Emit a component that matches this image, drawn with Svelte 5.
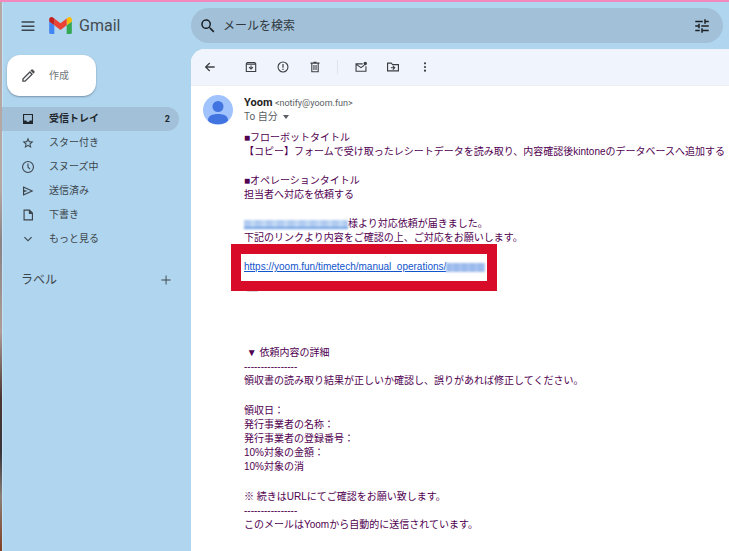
<script lang="ts">
  type NavItem = {
    icon: string;
    label: string;
    count?: number;
  };

  const nav: NavItem[] = [
    { icon: 'inbox', label: '受信トレイ', count: 2 },
    { icon: 'star', label: 'スター付き' },
    { icon: 'clock', label: 'スヌーズ中' },
    { icon: 'send', label: '送信済み' },
    { icon: 'draft', label: '下書き' },
    { icon: 'chevron', label: 'もっと見る' },
  ];

  // All paths are drawn on a 24x24 grid.
  const icons: Record<string, string> = {
    menu: 'M1 4h22v2.500H1zM1 11h22v2.500H1zM1 18h22v2.500H1z',
    pencil:
      'M2 17V22h5L19.200 9.800 14.200 4.800zM21.300 7.700a2 2 0 0 0 0-2.800l-2.200-2.200a2 2 0 0 0-2.800 0l-1.300 1.300 5 5zM4.200 19.800v-1.900l10-10 1.900 1.900-10 10z',
    inbox: 'M2 2h20v20H2zM4.200 4.200v10.800H8.500a3.600 3.600 0 0 0 7 0h4.300V4.200z',
    star: 'M23 9.100l-7.900-.700L12 1 8.900 8.400 1 9.100l6 5.200L5.200 22 12 17.900 18.800 22 17 14.300zM12 15.600l-3.800 2.300 1-4.300-3.300-2.900 4.400-.400L12 6.300l1.700 4 4.400.400-3.300 2.900 1 4.300z',
    clock:
      'M12 0a12 12 0 1 0 0 24 12 12 0 0 0 0-24zM12 21.800a9.800 9.800 0 1 1 0-19.600 9.800 9.800 0 0 1 0 19.600zM10.800 5h2.200v6.500l3.800 4-1.600 1.600-4.400-4.700z',
    send: 'M2 2.500v19l21-9.500zM4.300 6l13.500 6-13.500 6v-3.800l7-2.200-7-2.200z',
    draft: 'M3 1h12.500L22 7.500V23H3zM5.300 3.300v17.400h14.400V10h-6V3.300z',
    chevron: 'M5.600 7.600L12 14l6.400-6.400L20 9.200l-8 8-8-8z',
    plus: 'M11 1h2.200v10H23v2.200h-9.800V23H11v-9.800H1V11h10z',
    search:
      'M15.500 14h-.800l-.300-.300a6.500 6.500 0 1 0-.700.700l.300.300v.800l5 5 1.500-1.500zM9.500 14a4.500 4.500 0 1 1 0-9 4.500 4.500 0 0 1 0 9z',
    tune: 'M3 17v2h6v-2zM3 5v2h10V5zM13 21v-2h8v-2h-8v-2h-2v6zM7 9v2H3v2h4v2h2V9zM21 13v-2H11v2zM15 9h2V7h4V5h-4V3h-2z',
    back: 'M20 10.900H7.400l5-5L10.800 4.300 3 12l7.800 7.700 1.600-1.600-5-5H20z',
    archive:
      'M4 2h16l2.500 3v17h-21V5zM5 4.200l-.700.800h15.400L19 4.200zM3.700 7.500v12.300h16.600V7.500zM11 9h2.200v4.500l2-2L16.700 13 12 17.700 7.300 13l1.500-1.500 2.200 2z',
    spam: 'M12 1a11 11 0 1 0 0 22 11 11 0 0 0 0-22zM12 20.800a8.800 8.800 0 1 1 0-17.600 8.800 8.800 0 0 1 0 17.600zM10.800 6h2.400v7.500h-2.400zM10.800 15.500h2.400V18h-2.400z',
    trash:
      'M9 1.500h6V3h6v2.300h-1.500V22.500h-15V5.300H3V3h6zM6.700 5.300v15h10.600v-15zM8.800 8h2.200v10H8.800zM13 8h2.200v10H13z',
    unread:
      'M1 4.500h14.500v2.300H4.500l7.500 5 5.500-3.600 2.300.800L12 14.400 3.200 8.700v10.600h17.600V10.500H23v11H1zM20.500 1.500a3.500 3.500 0 1 1 0 7 3.500 3.500 0 0 1 0-7z',
    move: 'M0 3h9l2.500 3H24v15H0zM2.300 5.300v13.400h19.400V8.300h-11L8.200 5.300zM12.500 9l4.500 4.500-4.500 4.500-1.500-1.500 2-2H7.500v-2.200H13l-2-1.800z',
    more: 'M12 2.500a2.200 2.200 0 1 1 0 4.400 2.200 2.200 0 0 1 0-4.400zM12 9.800a2.200 2.200 0 1 1 0 4.400 2.200 2.200 0 0 1 0-4.400zM12 17.100a2.200 2.200 0 1 1 0 4.400 2.200 2.200 0 0 1 0-4.400z',
  };

  let selected = $state('inbox');
  let query = $state('');
</script>

{#snippet icon(name: string, size: number)}
  <svg width={size} height={size} viewBox="0 0 24 24" aria-hidden="true">
    <path d={icons[name]} fill="currentColor" fill-rule="evenodd" />
  </svg>
{/snippet}

{#snippet tool(name: string, label: string)}
  <button class="tool" aria-label={label}>{@render icon(name, name === 'back' ? 14 : 12)}</button>
{/snippet}

<div class="page">
  <aside class="sidebar">
    <div class="brand">
      <button class="menu" aria-label="メインメニュー">{@render icon('menu', 14)}</button>
      <a class="logo" href="#inbox">
        <svg width="23" height="17" viewBox="0 0 88 66" aria-hidden="true">
          <path fill="#4285f4" d="M6 66h14V32L0 17v43a6 6 0 0 0 6 6z" />
          <path fill="#34a853" d="M68 66h14a6 6 0 0 0 6-6V17L68 32z" />
          <path fill="#fbbc04" d="M68 6v26l20-15V9C88 1.600 79.500-2.600 73.600 1.800z" />
          <path fill="#ea4335" d="M20 32V6l24 18L68 6v26L44 50z" />
          <path fill="#c5221f" d="M0 9v8l20 15V6l-5.600-4.200C8.500-2.600 0 1.600 0 9z" />
        </svg>
        <span>Gmail</span>
      </a>
    </div>

    <button class="compose">{@render icon('pencil', 15)}<span>作成</span></button>

    <nav>
      {#each nav as item (item.icon)}
        <a
          href="#{item.icon}"
          class:active={selected === item.icon}
          onclick={() => (selected = item.icon)}
        >
          {@render icon(item.icon, 12)}
          <span>{item.label}</span>
          {#if item.count}
            <span class="count">{item.count}</span>
          {/if}
        </a>
      {/each}
    </nav>

    <div class="labels">
      <h2>ラベル</h2>
      <button aria-label="新しいラベルを作成">{@render icon('plus', 10)}</button>
    </div>
  </aside>

  <div class="content">
    <form class="search" role="search">
      <button type="button" aria-label="検索">{@render icon('search', 18)}</button>
      <input type="text" placeholder="メールを検索" aria-label="メールを検索" bind:value={query} />
      <button type="button" aria-label="検索オプションを表示">{@render icon('tune', 18)}</button>
    </form>

    <main>
      <div class="toolbar">
        {@render tool('back', '受信トレイに戻る')}
        <div class="group">
          {@render tool('archive', 'アーカイブ')}
          {@render tool('spam', '迷惑メールを報告')}
          {@render tool('trash', '削除')}
        </div>
        <span class="divider"></span>
        {@render tool('unread', '未読にする')}
        {@render tool('move', '移動')}
        {@render tool('more', 'その他')}
      </div>

      <article>
        <svg class="avatar" width="30" height="30" viewBox="0 0 30 30" aria-hidden="true">
          <defs>
            <clipPath id="avatar-clip"><circle cx="15" cy="15" r="15" /></clipPath>
          </defs>
          <g clip-path="url(#avatar-clip)">
            <rect width="30" height="30" fill="#a0c3fd" />
            <circle cx="15" cy="11.500" r="5.500" fill="#4174e0" />
            <path d="M5 25c0-4 4-6 10-6s10 2 10 6c0 2-3 4-10 4S5 27 5 25z" fill="#4174e0" />
          </g>
        </svg>

        <div class="message">
          <header>
            <div><strong>Yoom</strong> <span class="address">&lt;notify@yoom.fun&gt;</span></div>
            <button class="recipient">
              To 自分
              <svg width="6" height="4" viewBox="0 0 6 4" aria-hidden="true">
                <path d="M0 0h6L3 4z" fill="currentColor" />
              </svg>
            </button>
          </header>

          <section>
            <p>
              ■フローボットタイトル<br />
              【コピー】フォームで受け取ったレシートデータを読み取り、内容確認後kintoneのデータベースへ追加する
            </p>
            <p>
              ■オペレーションタイトル<br />
              担当者へ対応を依頼する
            </p>
            <p>
              <span class="masked mail"></span>様より対応依頼が届きました。<br />
              下記のリンクより内容をご確認の上、ご対応をお願いします。
            </p>
            <div class="task">
              <a href="https://yoom.fun/timetech/manual_operations/"
                >https://yoom.fun/timetech/manual_operations/<span class="masked"></span></a
              >
              <span class="trimmed"></span>
              <span class="frame"></span>
            </div>
          </section>

          <section class="details">
            <p>
              &nbsp;▼ 依頼内容の詳細<br />
              ----------------<br />
              領収書の読み取り結果が正しいか確認し、誤りがあれば修正してください。
            </p>
            <p>
              領収日：<br />
              発行事業者の名称：<br />
              発行事業者の登録番号：<br />
              10%対象の金額：<br />
              10%対象の消
            </p>
            <p>
              ※ 続きはURLにてご確認をお願い致します。<br />
              ----------------<br />
              このメールはYoomから自動的に送信されています。
            </p>
          </section>
        </div>
      </article>
    </main>
  </div>
</div>

<style>
  :global(body) {
    margin: 0;
  }

  .page {
    display: grid;
    grid-template-columns: 191px minmax(0, 1fr);
    box-sizing: border-box;
    min-height: 100vh;
    border-top: 2px solid #f288bd;
    background: #b0d5ee;
    color: #3c454c;
    font-family: Roboto, 'Noto Sans CJK JP', sans-serif;
    font-size: 10px;
    line-height: 14px;
  }

  svg {
    display: block;
    flex: none;
  }

  button {
    display: flex;
    align-items: center;
    padding: 0;
    border: 0;
    background: none;
    color: inherit;
    font: inherit;
    cursor: pointer;
  }

  a {
    color: inherit;
    text-decoration: none;
  }

  .sidebar {
    border-left: 2px solid;
    border-image: linear-gradient(#b5a7a3 0 34%, #8a8286 44%, #ad9d96 60%, #4a3630 72%, #37343b 82%, #8b8078 90%, #823e22) 1;
    box-shadow: inset 1px 0 #c3e2f6;
  }

  .brand {
    display: flex;
    align-items: center;
    gap: 14px;
    height: 47px;
    padding-left: 19px;
  }

  .logo {
    display: flex;
    align-items: center;
    gap: 7px;
    color: #444c52;
    font-size: 16px;
    line-height: 20px;
  }

  .compose {
    gap: 13px;
    height: 41px;
    margin: 6px 0 0 5px;
    padding: 0 27px 0 14px;
    border-radius: 13px;
    background: #fff;
    box-shadow: 0 1px 2px #7793a8;
    color: #4b4f53;
  }

  .compose span {
    color: #73777b;
  }

  nav {
    margin: 11px 12px 0 0;
  }

  nav a {
    display: grid;
    grid-template-columns: 14px 1fr auto;
    align-items: center;
    justify-items: start;
    gap: 14px;
    height: 24px;
    padding: 0 9px 0 19px;
    border-radius: 0 12px 12px 0;
  }

  nav svg {
    justify-self: center;
  }

  nav .active {
    background: #a2c1d8;
    color: #1f272d;
    font-weight: 700;
  }

  .count {
    font-size: 9px;
  }

  .labels {
    display: flex;
    align-items: center;
    justify-content: space-between;
    margin-top: 20px;
    padding: 0 20px 0 19px;
  }

  h2 {
    margin: 0;
    font-size: 12px;
    font-weight: 400;
    line-height: 18px;
  }

  .content {
    display: flex;
    flex-direction: column;
  }

  .search {
    display: flex;
    align-items: center;
    gap: 6px;
    height: 35px;
    margin: 6px 6px 6px 0;
    padding: 0 12px 0 8px;
    border-radius: 18px;
    background: #a2c1d8;
    color: #1c2125;
  }

  input {
    flex: 1;
    min-width: 0;
    padding: 0;
    border: 0;
    outline: 0;
    background: none;
    color: inherit;
    font: inherit;
    font-size: 12px;
    line-height: 18px;
  }

  input::placeholder {
    color: #30383e;
    opacity: 1;
  }

  main {
    flex: 1;
    border-radius: 14px 0 0 0;
    background: #fff;
  }

  .toolbar {
    display: flex;
    align-items: center;
    height: 36px;
    padding-left: 3px;
    border-bottom: 1px solid #eceff2;
    border-radius: 14px 0 0 0;
    background: #f0f5fd;
    color: #3b3f43;
  }

  .tool {
    justify-content: center;
    width: 32px;
    height: 32px;
  }

  .group {
    display: flex;
    margin-left: 9px;
  }

  .divider {
    width: 1px;
    height: 14px;
    margin: 0 7px 0 6px;
    background: #dfe4eb;
  }

  article {
    display: flex;
    align-items: flex-start;
    gap: 11px;
    padding: 9px 0 16px 12px;
  }

  .message {
    flex: 1;
    min-width: 0;
  }

  header {
    padding-top: 1px;
    color: #5a5e62;
  }

  strong {
    color: #1f1f1f;
    font-size: 11px;
  }

  .address {
    font-size: 9px;
  }

  .recipient {
    gap: 5px;
  }

  section {
    display: flex;
    flex-direction: column;
    gap: 15px;
    margin-top: 7px;
    color: #500050;
    font-family: 'Liberation Sans', 'Noto Sans CJK JP', sans-serif;
  }

  p {
    margin: 0;
    white-space: nowrap;
  }

  .details {
    gap: 16px;
    margin-top: 72px;
  }

  .task {
    position: relative;
    width: fit-content;
  }

  .task a {
    color: #1155cc;
    text-decoration: underline;
  }

  .masked {
    display: inline-block;
    width: 39px;
    height: 9px;
    background: repeating-linear-gradient(90deg, #9ab9ec 0 4px, #a8c3f0 6px 8px);
    filter: blur(1px);
    vertical-align: -2px;
  }

  .mail {
    width: 104px;
    background:
      linear-gradient(#6d9fe3, #6d9fe3) bottom / 100% 2px no-repeat,
      repeating-linear-gradient(90deg, #b0cbf0 0 5px, #c3d9f5 8px 11px);
  }

  .trimmed {
    position: absolute;
    top: 24px;
    left: 2px;
    width: 13px;
    height: 8px;
    border-radius: 3px;
    background: #d5d7da;
  }

  .frame {
    position: absolute;
    inset: -16px -12px -17px -13px;
    border: 10px solid #d80b28;
    pointer-events: none;
  }
</style>
